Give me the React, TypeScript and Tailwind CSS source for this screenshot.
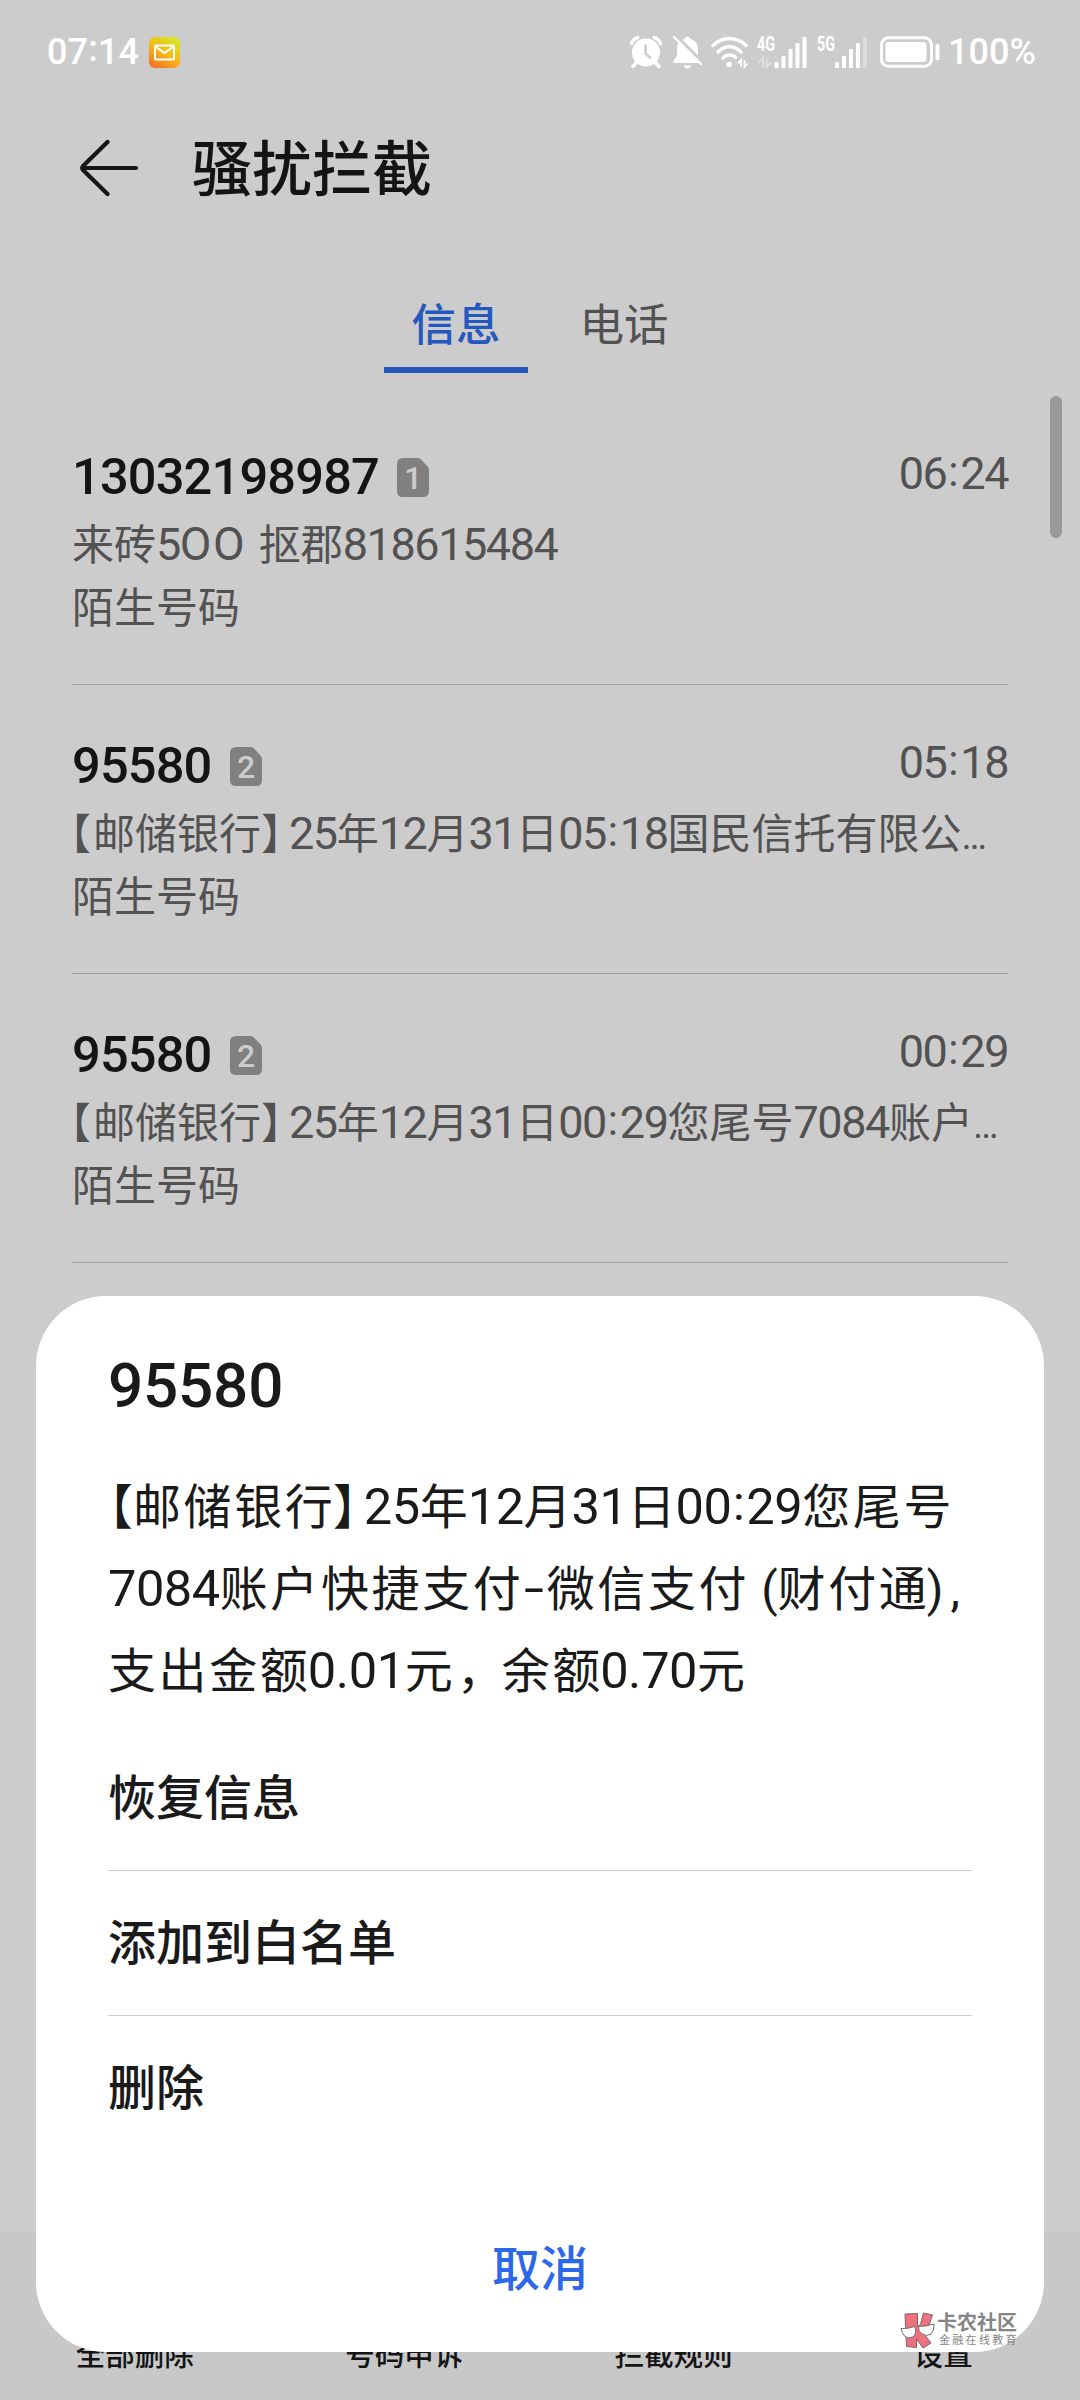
import clsx from "clsx";

type Size = "sm" | "lg";

const messages = [
  { number: "13032198987", sim: 1, time: "06:24", text: "来砖5OO 抠郡818615484" },
  { number: "95580", sim: 2, time: "05:18", text: "【邮储银行】25年12月31日05:18国民信托有限公…" },
  { number: "95580", sim: 2, time: "00:29", text: "【邮储银行】25年12月31日00:29您尾号7084账户…" },
];

const dialogLines = [
  "【邮储银行】25年12月31日00:29您尾号",
  "7084账户快捷支付-微信支付(财付通),",
  "支出金额0.01元，余额0.70元",
];

const actions = ["恢复信息", "添加到白名单", "删除"];
const bottomTabs = ["全部删除", "号码申诉", "拦截规则", "设置"];

const digitClass = {
  sm: "text-[45px] tracking-[-1.45px]",
  lg: "text-[50.6px] tracking-[-0.5px]",
};

const hanClass = {
  sm: "",
  lg: "tracking-[2.6px] -mr-[2.6px]",
};

const punctuation: Record<string, { sm: string; lg: string }> = {
  "【": { sm: "w-[21px] -indent-[2px] [font-feature-settings:'halt']", lg: "w-[25px] text-right [font-feature-settings:'halt']" },
  "】": { sm: "w-[28px] [font-feature-settings:'halt']", lg: "w-[31px] [font-feature-settings:'halt']" },
  ":": { sm: "w-[14px] text-center -translate-y-[3px]", lg: "w-[15px] text-center -translate-y-[4px]" },
  "-": { sm: "w-[22px] text-center", lg: "w-[26px] text-center scale-x-150 -translate-y-[1px]" },
  "(": { sm: "w-[24px] text-right", lg: "w-[31px] text-right" },
  ")": { sm: "w-[18px]", lg: "w-[21px]" },
  ",": { sm: "w-[14px] text-center", lg: "w-[15px] text-center" },
  ".": { sm: "w-[12px] text-center", lg: "w-[13px] text-center" },
  "，": { sm: "w-[42px] pl-1", lg: "w-[49px] pl-1" },
  "…": { sm: "w-[25px] text-[38px] text-center", lg: "w-[32px] text-center" },
};

// Numerals are set a bit larger than the Chinese text around them
const MixedText = ({ text, size }: { text: string; size: Size }) => {
  const parts = text.match(/\d+|[A-Z ]+|[【】:\-(),.，…]|[^\dA-Z 【】:\-(),.，…]+/g) || [];
  return (
    <>
      {parts.map((part, i) => {
        if (punctuation[part]) {
          return (
            <span key={i} className={clsx("inline-block leading-none", punctuation[part][size])}>
              {part}
            </span>
          );
        }
        if (/\d/.test(part)) {
          return (
            <span key={i} className={clsx("leading-none", digitClass[size])}>
              {part}
            </span>
          );
        }
        if (/[A-Z]/.test(part)) {
          return (
            <span key={i} className="text-[46px] leading-none tracking-[1.4px]">
              {part}
            </span>
          );
        }
        return (
          <span key={i} className={hanClass[size]}>
            {part}
          </span>
        );
      })}
    </>
  );
};

const SimBadge = ({ slot }: { slot: number }) => (
  <svg width="32" height="39" viewBox="0 0 32 39" className="ml-[18px]">
    <path d="M6 0H20.5Q22.5 0 24 1.5L30.3 8.3Q32 10 32 12V33Q32 39 26 39H6Q0 39 0 33V6Q0 0 6 0Z" fill="#808080" />
    <text x="16" y="31" textAnchor="middle" fontSize="32" fontWeight="500" fill="#cccccc">
      {slot}
    </text>
  </svg>
);

const StatusBar = () => (
  <div className="flex h-[104px] items-center pl-[47px] pr-[42px] text-[36px] font-medium text-white">
    <span>07</span>
    <span className="w-[10px] -translate-y-[3px] text-center">:</span>
    <span>14</span>
    <svg width="31" height="31" viewBox="0 0 31 31" className="ml-[10px] mt-px">
      <defs>
        <linearGradient id="mail" x1="0.2" y1="1" x2="0.8" y2="0">
          <stop offset="0" stopColor="#f4702a" />
          <stop offset="0.45" stopColor="#f9b418" />
          <stop offset="1" stopColor="#d4ea20" />
        </linearGradient>
      </defs>
      <rect width="31" height="31" rx="6" fill="url(#mail)" />
      <rect x="6" y="8.5" width="19" height="14" rx="1" fill="none" stroke="#fff" strokeWidth="2" />
      <path d="M6.5 9.5L15.5 16L24.5 9.5" fill="none" stroke="#fff" strokeWidth="2" />
    </svg>

    <div className="ml-auto flex items-center">
      <svg width="34" height="34" viewBox="0 0 34 34">
        <circle cx="17" cy="17.5" r="14" fill="#fff" />
        <path d="M2.5 8.5Q4 4 9 2.5M31.5 8.5Q30 4 25 2.5" stroke="#fff" strokeWidth="3.4" fill="none" strokeLinecap="round" />
        <path d="M7 28L4 31.5M27 28L30 31.5" stroke="#fff" strokeWidth="3.6" strokeLinecap="round" />
        <path d="M16.5 10.5V18.5L21 22.5" stroke="#ccc" strokeWidth="2.6" fill="none" strokeLinecap="round" />
      </svg>
      <svg width="32" height="34" viewBox="0 0 32 34" className="ml-[9px]">
        <path d="M15.5 1.5Q18 1.5 18.5 4Q26 6.5 26 14V20.5L29.5 26V28H1.5V26L5 20.5V14Q5 6.5 12.5 4Q13 1.5 15.5 1.5Z" fill="#fff" />
        <path d="M11.5 30.5H19.5Q18.5 33.5 15.5 33.5T11.5 30.5Z" fill="#fff" />
        <path d="M4 0.5L32 28.5" stroke="#ccc" strokeWidth="3" />
        <path d="M2 2L29 29" stroke="#fff" strokeWidth="2.4" strokeLinecap="round" />
      </svg>
      <svg width="38" height="34" viewBox="0 0 38 34" className="ml-[7px]">
        <g fill="none" stroke="#fff" strokeWidth="3.4" strokeLinecap="round">
          <path d="M2 10.5Q9 3.5 18.5 3.5T35 10.5" />
          <path d="M7 17Q12 11.8 18.5 11.8T30 17" />
          <path d="M12 23Q14.5 20 18.5 20T24.5 22.5" />
        </g>
        <circle cx="18" cy="29.5" r="2.8" fill="#fff" />
        <path d="M30 32V25L27 28.5M33.5 25V32L36.5 28.5" fill="none" stroke="#fff" strokeWidth="1.8" />
      </svg>
      <svg width="52" height="34" viewBox="0 0 52 34" className="ml-[8px]" fill="#fff">
        <text x="0" y="15.5" fontSize="19.5" fontWeight="700" textLength="18" lengthAdjust="spacingAndGlyphs">
          4G
        </text>
        <path d="M6 32V23L2 27.5M9.5 23V32L14 27.5" fill="none" stroke="#e0e0e0" strokeWidth="2" />
        <rect x="17.5" y="27" width="4" height="6" rx="1" />
        <rect x="24.5" y="21" width="4" height="12" rx="1" />
        <rect x="31.5" y="14" width="4" height="19" rx="1" />
        <rect x="38.5" y="8" width="4" height="25" rx="1" />
        <rect x="45.5" y="2" width="4" height="31" rx="1" />
      </svg>
      <svg width="52" height="34" viewBox="0 0 52 34" className="ml-[8px]" fill="#fff">
        <text x="0" y="15.5" fontSize="19.5" fontWeight="700" textLength="18" lengthAdjust="spacingAndGlyphs">
          5G
        </text>
        <rect x="18" y="27" width="4" height="6" rx="1" />
        <rect x="25" y="21" width="4" height="12" rx="1" />
        <rect x="32" y="14" width="4" height="19" rx="1" />
        <rect x="39" y="8" width="4" height="25" rx="1" />
        <rect x="46" y="2" width="4" height="31" rx="1" fill="#dcdcdc" />
      </svg>
      <svg width="62" height="34" viewBox="0 0 62 34" className="ml-[10px]">
        <rect x="2.5" y="2.8" width="50" height="28.5" rx="7" fill="none" stroke="#fff" strokeWidth="3" />
        <rect x="6.5" y="7" width="41" height="20" rx="3" fill="#fff" />
        <rect x="56.5" y="9" width="4" height="16" rx="1.5" fill="#fff" />
      </svg>
      <span className="ml-[7px] w-[90px] whitespace-nowrap">100%</span>
    </div>
  </div>
);

const Watermark = () => (
  <div className="absolute left-[900px] top-[2312px] flex items-start">
    <svg width="35" height="37" viewBox="0 0 35 37" stroke="#77696b" strokeWidth="1">
      <path d="M5 2L17.5 1.5V15L20.5 12L23.5 1L32.5 3L29 13L22.5 20L31 31L23 36L16.5 27L16.5 35.5L6.5 34.5Z" fill="#f0717e" />
      <path d="M1 16.5Q8 17 14.5 14.5Q17.5 21 13 25Q8.5 27.5 4.5 24Q2 21 1 16.5Z" fill="#fff" />
      <path d="M18.5 14.5Q26 14.5 34 12Q34.5 19 31 22Q26.5 25 22 22Q18 19 18.5 14.5Z" fill="#fff" />
    </svg>
    <div className="ml-[2px] flex flex-col whitespace-nowrap text-[#858585]">
      <span className="text-[20px] font-bold leading-[23px]">卡农社区</span>
      <span className="pl-[2px] text-[11px] leading-[12px] tracking-[2.3px]">金融在线教育</span>
    </div>
  </div>
);

const App = () => {
  return (
    <div className="relative flex h-[2400px] w-[1080px] flex-col overflow-hidden bg-[#cccccc] font-[Roboto,'Noto_Sans_CJK_SC',sans-serif] text-[#141414]">
      <StatusBar />

      <header className="flex h-[128px] items-center pl-[79px]">
        <svg width="60" height="58" viewBox="0 0 60 58" fill="none" stroke="#161616" strokeWidth="4.2" strokeLinecap="round" strokeLinejoin="round">
          <path d="M28.5 3L4 27Q2.5 29 4 31L28.5 55M4 29H57" />
        </svg>
        <h1 className="ml-[53px] pt-[5px] text-[60px] font-medium leading-none">骚扰拦截</h1>
      </header>

      <nav className="mb-[23px] flex h-[141px] items-end justify-center gap-[26px] text-[44.5px] leading-none">
        <button className="h-[96px] w-[144px] border-b-6 border-[#2757b9] pt-[8px] font-medium text-[#2458be]">信息</button>
        <button className="h-[96px] w-[142px] border-b-6 border-transparent pr-[2px] pt-[8px] text-[#525252]">电话</button>
      </nav>

      <ul className="px-[72px]">
        {messages.map((item) => (
          <li key={item.time} className="h-[289px] border-b border-[#a2a2a2] pt-[44px] text-[42px] text-[#525252]">
            <div className="flex h-[74px] items-center leading-none">
              <span className="text-[50.6px] font-medium tracking-[-0.85px] text-[#141414]">{item.number}</span>
              <SimBadge slot={item.sim} />
              <span className="ml-auto pb-[7px]">
                <MixedText text={item.time} size="sm" />
              </span>
            </div>
            <p className="h-[63px] whitespace-nowrap leading-[63px]">
              <MixedText text={item.text} size="sm" />
            </p>
            <p className="h-[63px] leading-[63px]">陌生号码</p>
          </li>
        ))}
      </ul>

      <div className="absolute right-[18px] top-[396px] h-[142px] w-[12px] rounded-full bg-[#999999]" />

      <footer className="mt-auto grid h-[168px] grid-cols-4 bg-[#c8c8c8] pr-[2px] pt-[108px] text-center text-[29.5px] font-medium leading-[30px]">
        {bottomTabs.map((tab) => (
          <span key={tab}>{tab}</span>
        ))}
      </footer>

      <section className="absolute inset-x-[36px] bottom-[48px] top-[1296px] flex flex-col rounded-[70px] bg-white px-[72px] pt-[50px] text-[#1a1a1a]">
        <h2 className="h-[80px] text-[62px] font-medium leading-[80px] tracking-[-0.2px]">95580</h2>
        <div className="mt-[41px] whitespace-nowrap text-[48px] leading-[82px]">
          {dialogLines.map((line) => (
            <p key={line} className="h-[82px]">
              <MixedText text={line} size="lg" />
            </p>
          ))}
        </div>
        <div className="mt-[13px] text-[48px] font-medium">
          {actions.map((action) => (
            <button key={action} className="flex h-[145px] w-full items-center border-b border-[#cbcbcb] pt-[2px] last:border-transparent">
              {action}
            </button>
          ))}
        </div>
        <button className="mt-[69px] h-[80px] text-[48px] font-medium leading-[80px] text-[#2d68e8]">取消</button>
      </section>

      <Watermark />
    </div>
  );
};

export default App;
